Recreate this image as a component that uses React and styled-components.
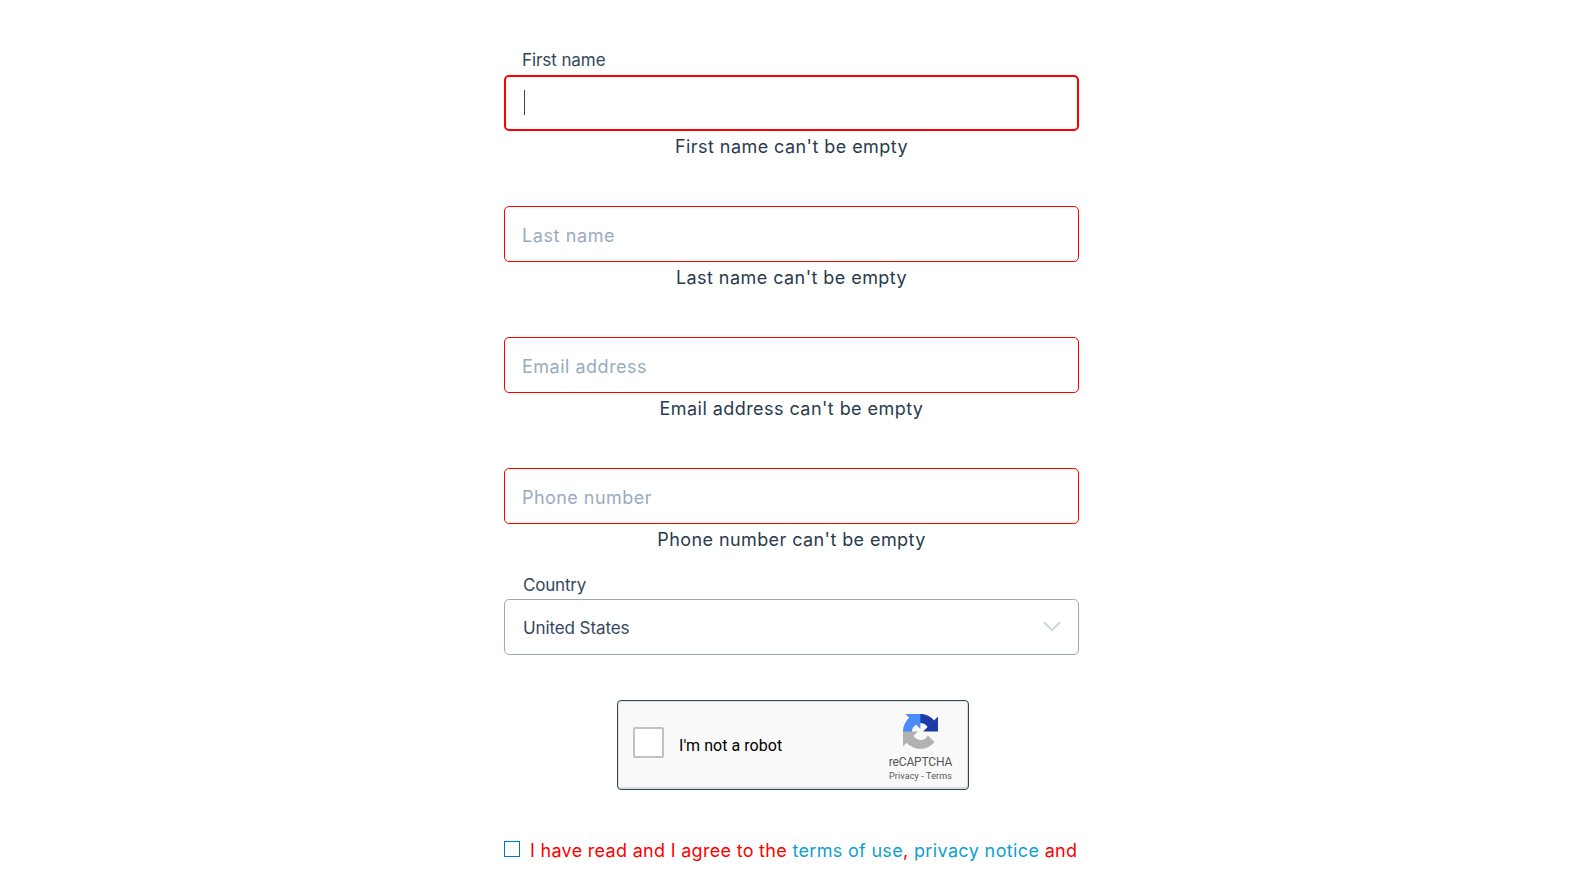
import React from 'react';
import styled, { createGlobalStyle } from 'styled-components';

const GlobalStyle = createGlobalStyle`
  *, *::before, *::after { box-sizing: border-box; }
  body { margin: 0; background: #fff; overflow: hidden; }
`;

const Page = styled.main`
  height: 873px;
  overflow: hidden;
  display: flex;
  justify-content: center;
  padding: 44px 0 0 1px;
  font-family: Inter, sans-serif;
  font-size: 18px;
  color: #33475b;
`;

const Form = styled.form`
  width: 575px;
  flex: none;
  display: flex;
  flex-direction: column;
`;

const FieldGroup = styled.div`
  height: 131px;
  flex: none;
`;

const SelectGroup = styled.div`
  height: 87px;
  flex: none;
`;

const Label = styled.div`
  height: 31px;
  padding-left: ${(p) => p.$indent || 18}px;
  font-size: 17px;
  line-height: ${(p) => p.$line || 33}px;
  letter-spacing: ${(p) => p.$tracking || 0}px;
`;

const FieldBox = styled.div`
  height: 56px;
  display: flex;
  align-items: center;
  padding: 3px 16px 0 ${(p) => (p.$focused ? 16 : 17)}px;
  border: ${(p) => (p.$focused ? 2 : 1)}px solid #f00;
  border-radius: 5px;
`;

const Placeholder = styled.span`
  color: #99acbf;
  letter-spacing: ${(p) => p.$tracking}px;
`;

const Caret = styled.span`
  width: 1px;
  height: 25px;
  margin: 0 0 4px 2px;
  background: #33475b;
`;

const ErrorText = styled.div`
  line-height: 32px;
  text-align: center;
  color: #2a3b4d;
  letter-spacing: ${(p) => p.$tracking}px;
`;

const SelectBox = styled.div`
  height: 56px;
  display: flex;
  align-items: center;
  justify-content: space-between;
  padding: 2px 17px 0 18px;
  border: 1px solid #99acbd;
  border-radius: 5px;
  font-size: 17px;
  line-height: 24px;
  letter-spacing: -0.1px;
`;

const Chevron = styled.svg`
  width: 18px;
  height: 11px;
  margin-bottom: 3px;
  fill: none;
  stroke: #cbd6e2;
  stroke-width: 2;
`;

const Captcha = styled.div`
  width: 352px;
  height: 90px;
  flex: none;
  margin: 45px 0 0 113px;
  display: flex;
  align-items: flex-start;
  background: #f9f9f9;
  border: 1px solid #33475b;
  border-radius: 4px;
  box-shadow: inset -1px -2px 0 #dcdddd, inset 1px 1px 0 #dfe1e3;
  font-family: Roboto, sans-serif;
`;

const CaptchaCheck = styled.span`
  width: 31px;
  height: 31px;
  margin: 26px 0 0 15px;
  background: #fff;
  border: 2px solid #c1c1c1;
  border-radius: 2px;
`;

const CaptchaText = styled.span`
  flex: 1;
  margin: 34px 0 0 15px;
  font-size: 16px;
  line-height: 22px;
  letter-spacing: 0.04px;
  color: #000;
`;

const CaptchaBrand = styled.div`
  width: 65px;
  margin: 13px 15px 0 0;
  display: flex;
  flex-direction: column;
  align-items: center;
  color: #555;
  white-space: nowrap;
`;

const CaptchaLogo = styled.svg`
  width: 35px;
  height: 35px;
  margin-right: 1px;
`;

const CaptchaName = styled.span`
  margin-top: 5px;
  font-size: 12px;
  line-height: 16px;
  letter-spacing: -0.15px;
`;

const CaptchaLinks = styled.span`
  font-size: 9px;
  line-height: 12px;
  letter-spacing: 0.13px;
`;

const Consent = styled.div`
  margin-top: 45px;
  display: flex;
  line-height: 31px;
  color: #f00;
  white-space: pre;
`;

const ConsentCheck = styled.span`
  width: 16px;
  height: 16px;
  margin: 6px 10px 0 0;
  border: 1px solid #0078d7;
`;

const Phrase = styled.span`
  letter-spacing: ${(p) => p.$tracking}px;
`;

const ConsentLink = styled.a`
  color: #0f9fd0;
`;

const fields = [
  { name: 'First name', error: 0.44, focused: true },
  { name: 'Last name', error: 0.44, tracking: 0.6 },
  { name: 'Email address', error: 0.44, tracking: 0.5 },
  { name: 'Phone number', error: 0.41, tracking: 0.45 },
];

export default function App() {
  return (
    <Page>
      <GlobalStyle />
      <Form>
        {fields.map((f) => (
          <FieldGroup key={f.name}>
            <Label $tracking={-0.08}>{f.focused ? f.name : null}</Label>
            <FieldBox $focused={f.focused}>
              {f.focused ? <Caret /> : <Placeholder $tracking={f.tracking}>{f.name}</Placeholder>}
            </FieldBox>
            <ErrorText $tracking={f.error}>{f.name} can't be empty</ErrorText>
          </FieldGroup>
        ))}
        <SelectGroup>
          <Label $indent={19} $line={35} $tracking={-0.2}>Country</Label>
          <SelectBox>
            United States
            <Chevron viewBox="0 0 18 11"><path d="M1 1.2 9 9.2 17 1.2" /></Chevron>
          </SelectBox>
        </SelectGroup>
        <Captcha>
          <CaptchaCheck />
          <CaptchaText>I'm not a robot</CaptchaText>
          <CaptchaBrand>
            <CaptchaLogo viewBox="0 0 64 64">
              <path fill="#1c3aa9" d="M64 31.955l-.033-1.37V4.687l-7.16 7.16C50.948 4.674 42.033.093 32.05.093c-10.4 0-19.622 4.96-25.458 12.64l11.736 11.86a15.55 15.55 0 0 1 4.754-5.334c2.05-1.6 4.952-2.906 8.968-2.906.485 0 .86.057 1.135.163 4.976.393 9.288 3.14 11.828 7.124l-8.307 8.307L64 31.953" />
              <path fill="#4a8df8" d="M31.862.094l-1.37.033H4.594l7.16 7.16C4.58 13.147 0 22.06 0 32.046c0 10.4 4.96 19.622 12.64 25.458L24.5 45.768a15.55 15.55 0 0 1-5.334-4.754c-1.6-2.05-2.906-4.952-2.906-8.968 0-.485.057-.86.163-1.135.393-4.976 3.14-9.288 7.124-11.828l8.307 8.307L31.86.095" />
              <path fill="#b2b2b2" d="M.001 32.045l.033 1.37v25.898l7.16-7.16c5.86 7.173 14.774 11.754 24.76 11.754 10.4 0 19.622-4.96 25.458-12.64l-11.736-11.86a15.55 15.55 0 0 1-4.754 5.334c-2.05 1.6-4.952 2.906-8.968 2.906-.485 0-.86-.057-1.135-.163-4.976-.393-9.288-3.14-11.828-7.124l8.307-8.307c-10.522.04-22.4.066-27.295-.005" />
            </CaptchaLogo>
            <CaptchaName>reCAPTCHA</CaptchaName>
            <CaptchaLinks>Privacy - Terms</CaptchaLinks>
          </CaptchaBrand>
        </Captcha>
        <Consent>
          <ConsentCheck />
          <Phrase $tracking={0.3}>I have read and I agree to the </Phrase>
          <Phrase $tracking={0.32}><ConsentLink>terms of use</ConsentLink>, </Phrase>
          <Phrase $tracking={0.38}><ConsentLink>privacy notice</ConsentLink> </Phrase>
          <Phrase $tracking={0.2}>and</Phrase>
        </Consent>
      </Form>
    </Page>
  );
}
